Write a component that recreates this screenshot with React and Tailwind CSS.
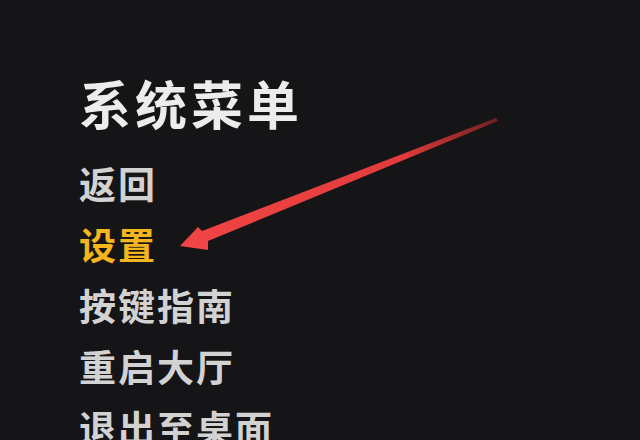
const ITEMS = [
  { label: '返回' },
  { label: '设置', active: true },
  { label: '按键指南' },
  { label: '重启大厅' },
  { label: '退出至桌面' },
]

function Arrow() {
  return (
    <svg className="absolute inset-0 pointer-events-none" width="640" height="440" viewBox="0 0 640 440">
      <defs>
        <linearGradient id="tail" x1="182" y1="245" x2="498" y2="120" gradientUnits="userSpaceOnUse">
          <stop offset="0" stopColor="#f24545" />
          <stop offset="0.7" stopColor="#e23b3b" />
          <stop offset="1" stopColor="#6e2020" />
        </linearGradient>
      </defs>
      <polygon
        points="180,246 198,227 202,231 496,118 498,121 208,241 208,250"
        fill="url(#tail)"
      />
    </svg>
  )
}

export default function App() {
  return (
    <div
      className="relative w-[640px] h-[440px] overflow-hidden bg-[#151517]"
      style={{ fontFamily: '"Noto Sans CJK SC", "Noto Sans", sans-serif' }}
    >
      <div className="flex flex-col pl-[79px] pt-[77px]">
        <h1 className="text-[52px] leading-[52px] font-bold tracking-[4px] text-[#ececec]">系统菜单</h1>
        <ul className="mt-[24px] flex flex-col">
          {ITEMS.map(item => (
            <li
              key={item.label}
              className={`h-[61px] flex items-center text-[37px] font-bold tracking-[2px] ${item.active ? 'text-[#f4b51d]' : 'text-[#d2d2d2]'}`}
            >
              {item.label}
            </li>
          ))}
        </ul>
      </div>
      <Arrow />
    </div>
  )
}
